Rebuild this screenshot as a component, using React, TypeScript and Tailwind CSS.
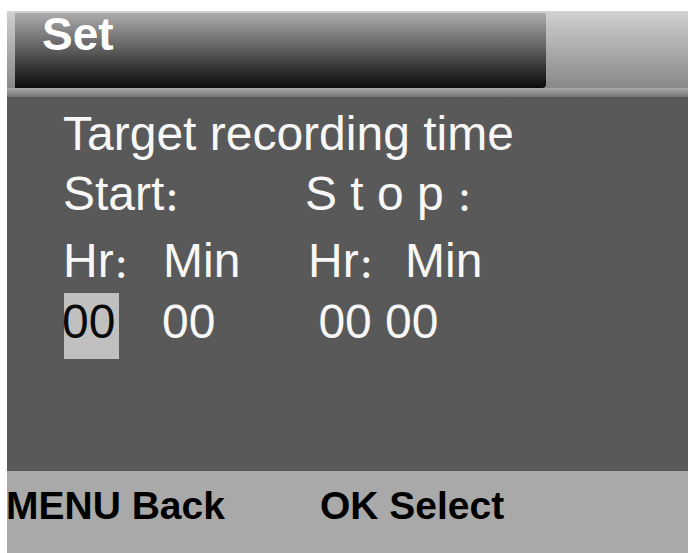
import React from "react";

function Colon() {
  return <span className="text-[30px] leading-none font-bold">：</span>;
}

export default function App() {
  return (
    <div className="w-[692px] h-[553px] bg-white overflow-hidden font-['Liberation_Sans','Noto_Sans_CJK_SC',sans-serif]">
      <div className="ml-[7px] pt-[11px] w-[681px] flex flex-col">
        {/* Header */}
        <div className="flex flex-col">
          <div className="h-[77px] bg-gradient-to-b from-[#cfd1d2] to-[#86888a] flex">
            <div className="ml-[8px] mt-[2px] w-[531px] h-[75px] rounded-br-[4px] bg-gradient-to-b from-[#acacac] via-[#5c5c5c] to-[#0c0c0c]">
              <div className="pl-[27px] -mt-[2px] text-[46px] leading-[46px] font-bold text-white">
                Set
              </div>
            </div>
          </div>
          <div className="h-[9px] bg-gradient-to-b from-[#a9a9a9] to-[#747474]" />
        </div>

        {/* Body */}
        <div className="h-[374px] bg-[#595959] pl-[56px] pt-[13px] text-[48px] leading-[48px] text-[#f7f7f7]">
          <div className="h-[60px] whitespace-nowrap">Target recording time</div>
          <div className="h-[67px] flex whitespace-nowrap">
            <span className="w-[242px]">
              Start
              <Colon />
            </span>
            <span>
              S t o p <Colon />
            </span>
          </div>
          <div className="h-[56px] flex whitespace-nowrap">
            <span className="w-[100px]">
              Hr
              <Colon />
            </span>
            <span className="w-[145px]">Min</span>
            <span className="w-[97px]">
              Hr
              <Colon />
            </span>
            <span>Min</span>
          </div>
          <div className="flex items-start whitespace-nowrap">
            <div className="ml-[1px] w-[55px] h-[66px] bg-[#c0c0c0] pt-[5px]">
              <span className="block -ml-[2px] text-[#0a0a0a]">00</span>
            </div>
            <span className="ml-[43px] pt-[5px]">00</span>
            <span className="ml-[103px] pt-[5px]">00 00</span>
          </div>
        </div>

        {/* Footer */}
        <div className="h-[82px] bg-[#a9a9a9] pt-[15px] flex text-[39px] leading-[39px] font-bold text-black whitespace-nowrap">
          <span className="-ml-[1px]">MENU Back</span>
          <span className="ml-[95px]">OK Select</span>
        </div>
      </div>
    </div>
  );
}
